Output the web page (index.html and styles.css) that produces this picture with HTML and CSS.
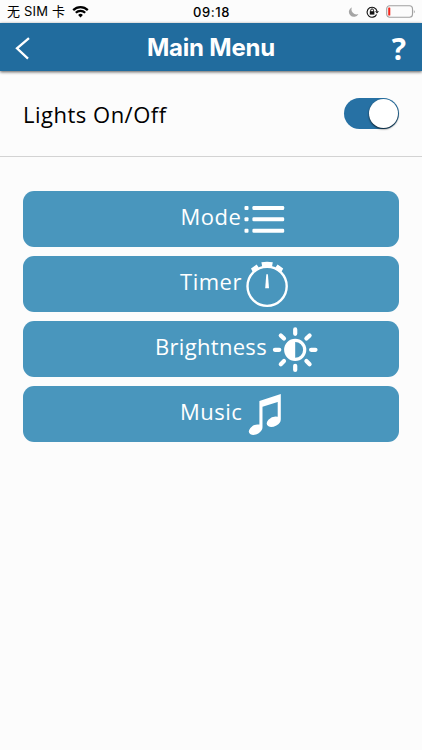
FILE: index.html
```html
<!DOCTYPE html>
<html lang="en">
<head>
  <meta charset="UTF-8">
  <meta name="viewport" content="width=device-width, initial-scale=1.0">
  <title>Main Menu</title>
  <link rel="stylesheet" href="styles.css">
</head>
<body>
  <div class="status-bar">
    <div class="carrier">
      <span class="carrier-name">无 SIM 卡</span>
      <svg width="17" height="13" viewBox="0 0 17 13" fill="none" stroke="#000" stroke-width="2.2">
        <path d="M1.2 5.1a10.3 10.3 0 0 1 14.6 0M3.8 7.8a6.6 6.6 0 0 1 9.4 0"/>
        <path d="M8.5 12.4L6.1 9.9a3.4 3.4 0 0 1 4.8 0z" fill="#000" stroke="none"/>
      </svg>
    </div>
    <span class="time">09:18</span>
    <div class="indicators">
      <svg width="11" height="12" viewBox="0 0 11 12">
        <path d="M4 1.2A5 5 0 1 0 10.4 8 5 5 0 0 1 4 1.2z" fill="#a5a5a5"/>
      </svg>
      <svg class="lock" width="13" height="12" viewBox="0 0 13 12" fill="none" stroke="#111">
        <path d="M10.6 8.4A5 5 0 1 1 11 5.2" stroke-width="1.1"/>
        <path d="M9 5.2h4L11 7.5z" fill="#111" stroke="none"/>
        <path d="M4.7 5.6V4.3a1.4 1.4 0 0 1 2.8 0v1.3"/>
        <path d="M3.8 5.2h4.6v3.4H3.8z" fill="#111" stroke="none"/>
      </svg>
      <svg width="30" height="13" viewBox="0 0 30 13">
        <rect x=".7" y=".7" width="25.8" height="11.6" rx="3" fill="none" stroke="#a0a0a0" stroke-width="1.1"/>
        <rect x="2.2" y="2.4" width="2.1" height="8.2" rx=".6" fill="#f5281e"/>
        <path d="M27.8 4.5q1.7 2 0 4z" fill="#999"/>
      </svg>
    </div>
  </div>

  <header class="header">
    <svg class="back" width="16" height="24" viewBox="0 0 16 24" fill="none" stroke="#fff" stroke-width="2.3">
      <path d="M14 2.2L2 12.4 13 22.6"/>
    </svg>
    <h1>Main Menu</h1>
    <span class="help">?</span>
  </header>

  <div class="lights">
    <span class="lights-label">Lights On/Off</span>
    <div class="switch active"><div class="knob"></div></div>
  </div>

  <div class="menu">
    <div class="menu-button">
      <span class="label mode">Mode</span>
      <svg class="icon" width="52" height="56" viewBox="0 0 52 56" fill="#fff">
        <rect x="2.5" y="15" width="4" height="4" rx="1"/>
        <rect x="2.5" y="26.3" width="4" height="4" rx="1"/>
        <rect x="2.5" y="37.7" width="4" height="4" rx="1"/>
        <rect x="10.4" y="15" width="31.8" height="4" rx="1.3"/>
        <rect x="10.4" y="26.3" width="31.8" height="4" rx="1.3"/>
        <rect x="10.4" y="37.7" width="31.8" height="4" rx="1.3"/>
      </svg>
    </div>
    <div class="menu-button">
      <span class="label timer">Timer</span>
      <svg class="icon" width="52" height="56" viewBox="0 0 52 56" fill="#fff">
        <circle cx="25.1" cy="30.3" r="19.6" fill="none" stroke="#fff" stroke-width="2.4"/>
        <path d="M19.4 6.2q5.7-1 11.4 0l-.6 3.2v2.4H20V9.4z"/>
        <path d="M9 12.6l5.6-4.1 2 2.8-.2 1.3-4.9 3.8-1.1-1.2zM41.2 12.6l-5.6-4.1-2 2.8.2 1.3 4.9 3.8 1.1-1.2z"/>
        <path d="M24.3 18.3h1.6l1.1 13.9h-3.8z"/>
      </svg>
    </div>
    <div class="menu-button">
      <span class="label brightness">Brightness</span>
      <svg class="icon" width="52" height="56" viewBox="0 0 52 56" fill="none" stroke="#fff" stroke-width="4.2" stroke-linecap="round">
        <circle cx="27.2" cy="28.8" r="9.5" stroke-width="3.2"/>
        <path d="M27.2 19a9.8 9.8 0 0 0 0 19.6z" fill="#fff" stroke="none"/>
        <path d="M27.2 8.4v4.4M27.2 44.8v4.2M6.9 28.8h4.4M43.1 28.8h4.4M12.8 14.4l3.2 3.2M38.4 40l3.2 3.2M41.6 14.4l-3.2 3.2M16 40l-3.2 3.2"/>
      </svg>
    </div>
    <div class="menu-button">
      <span class="label music">Music</span>
      <svg class="icon" width="52" height="56" viewBox="0 0 52 56" fill="#fff">
        <path d="M17.4 14.9L38.8 8v24.8q.2 4.4-4.4 6.6-4.8 2.5-7.9.9-3.6-2.3-.1-6.6 4.3-4.2 9.3-3V16l-15.2 4.8v20.3q.1 3.8-4.2 6.3-4.7 2.5-7.8.8-3.4-2.2-.1-6.3 4-4.3 9-3.3z"/>
      </svg>
    </div>
  </div>
</body>
</html>
```

FILE: styles.css
```css
body {
  background-color: #fcfcfc;
  color: #000;
  font-family: "Open Sans", "Noto Sans", sans-serif;
  margin: 0;
  min-height: 100vh;
}

svg {
  display: block;
  flex: none;
}

.status-bar {
  display: grid;
  grid-template-columns: 1fr auto 1fr;
  align-items: center;
  height: 23px;
  padding: 0 6px 0 7px;
  box-sizing: border-box;
  font-family: Inter, "Noto Sans CJK SC", sans-serif;
  font-size: 13px;
}

.carrier {
  display: flex;
  align-items: center;
  gap: 7px;
  white-space: nowrap;
}

.carrier-name {
  line-height: 23px;
  letter-spacing: 0.2px;
}

.time {
  font-weight: 500;
  letter-spacing: 0.6px;
}

.indicators {
  display: flex;
  align-items: center;
  justify-content: flex-end;
  gap: 7px;
}

.header {
  display: flex;
  align-items: center;
  justify-content: space-between;
  height: 48px;
  padding: 0 15px;
  background-color: #216c9e;
  color: #fff;
  box-shadow: 0 1px 3px rgba(0, 0, 0, 0.65);
}

.back {
  margin-top: 2px;
}

.header h1 {
  margin: 0;
  padding-top: 2px;
  font-family: Inter, sans-serif;
  font-size: 24px;
  font-weight: 650;
  letter-spacing: -0.2px;
  line-height: 46px;
}

.help {
  width: 16px;
  padding-top: 4px;
  font-size: 30px;
  font-weight: 700;
  line-height: 44px;
  text-align: center;
}

.lights {
  display: flex;
  align-items: center;
  justify-content: space-between;
  height: 85px;
  padding: 0 23px;
  border-bottom: 1px solid #d3d3d3;
}

.lights-label {
  font-size: 22px;
  font-weight: 450;
  letter-spacing: 0.5px;
}

.switch {
  display: flex;
  width: 55px;
  height: 31px;
  border-radius: 16px;
  background-color: #aaa;
}

.switch.active {
  justify-content: flex-end;
  background-color: #2771a4;
}

.knob {
  width: 29px;
  height: 29px;
  margin: 1px;
  border-radius: 50%;
  background-color: #fff;
  box-shadow: 0 1px 2px rgba(0, 0, 0, 0.8);
}

.menu {
  display: flex;
  flex-direction: column;
  gap: 9px;
  padding: 34px 23px 0;
}

.menu-button {
  display: flex;
  justify-content: center;
  height: 56px;
  border-radius: 11px;
  background-color: #4996bd;
  color: #fff;
}

.label {
  width: 62px;
  font-size: 22px;
  font-weight: 450;
  letter-spacing: 0.5px;
  line-height: 51px;
  text-align: center;
  white-space: nowrap;
}

.label.brightness {
  width: 114px;
  letter-spacing: 0.3px;
}

/* keeps the label centered, the icon hangs off its right side */
.icon {
  margin-right: -52px;
}
```
